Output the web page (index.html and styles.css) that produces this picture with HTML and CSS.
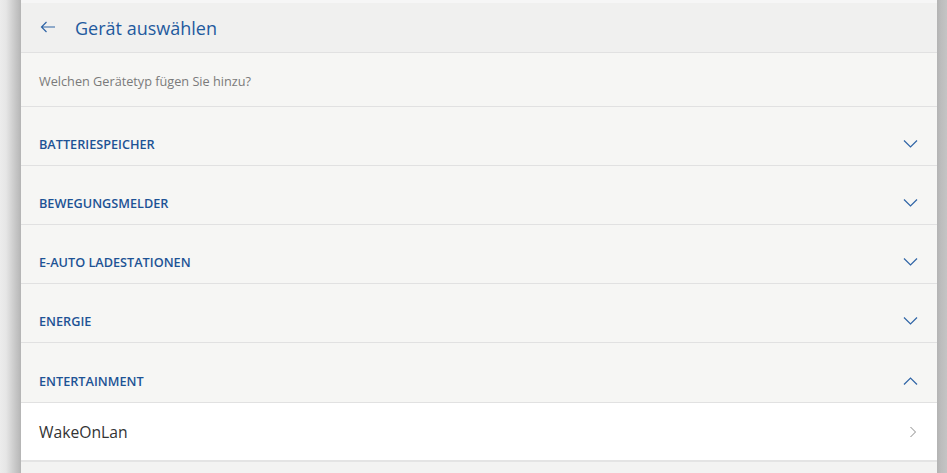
FILE: index.html
```html
<!DOCTYPE html>
<html lang="de">
<head>
<meta charset="utf-8">
<link rel="stylesheet" href="styles.css">
</head>
<body>
<div class="frame">
  <div class="edge-left"></div>
  <main class="panel">
    <header class="head">
      <svg class="back" width="16" height="12" viewBox="0 0 16 12"><path d="M15 6H1.5M6.5 1L1.5 6l5 5" fill="none" stroke="#2f64a6" stroke-width="1.2"/></svg>
      <h1 class="title">Gerät auswählen</h1>
    </header>
    <div class="question">Welchen Gerätetyp fügen Sie hinzu?</div>
    <div class="cat"><span class="cat-label">BATTERIESPEICHER</span><svg class="chev" width="15" height="10" viewBox="0 0 15 10"><path d="M1 1.5l6.5 6.5 6.5-6.5" fill="none" stroke="#2f64a6" stroke-width="1.2"/></svg></div>
    <div class="cat"><span class="cat-label">BEWEGUNGSMELDER</span><svg class="chev" width="15" height="10" viewBox="0 0 15 10"><path d="M1 1.5l6.5 6.5 6.5-6.5" fill="none" stroke="#2f64a6" stroke-width="1.2"/></svg></div>
    <div class="cat"><span class="cat-label">E-AUTO LADESTATIONEN</span><svg class="chev" width="15" height="10" viewBox="0 0 15 10"><path d="M1 1.5l6.5 6.5 6.5-6.5" fill="none" stroke="#2f64a6" stroke-width="1.2"/></svg></div>
    <div class="cat"><span class="cat-label">ENERGIE</span><svg class="chev" width="15" height="10" viewBox="0 0 15 10"><path d="M1 1.5l6.5 6.5 6.5-6.5" fill="none" stroke="#2f64a6" stroke-width="1.2"/></svg></div>
    <div class="cat cat-open"><span class="cat-label">ENTERTAINMENT</span><svg class="chev" width="15" height="10" viewBox="0 0 15 10"><path d="M1 8.5l6.5-6.5 6.5 6.5" fill="none" stroke="#2f64a6" stroke-width="1.2"/></svg></div>
    <div class="item"><span class="item-label">WakeOnLan</span><svg class="chev-r" width="8" height="12" viewBox="0 0 8 12"><path d="M1.5 1l5 5-5 5" fill="none" stroke="#8a8a8a" stroke-width="1"/></svg></div>
    <div class="rest"></div>
  </main>
  <div class="edge-right"></div>
</div>
</body>
</html>
```

FILE: styles.css
```css
html, body {
  margin: 0;
  padding: 0;
  height: 100%;
}
body {
  font-family: "Open Sans", "Noto Sans", sans-serif;
  background: #e9e9e9;
  overflow: hidden;
}
.frame {
  display: flex;
  height: 473px;
  width: 947px;
}
.edge-left {
  width: 21px;
  flex: none;
  background: linear-gradient(to right, #ececec 0px, #e6e6e6 6px, #d2d2d2 12px, #bcbcbc 19px, #b4b4b4 21px);
}
.edge-right {
  width: 10px;
  flex: none;
  background: linear-gradient(to right, #b3b3b3 0px, #bdbdbd 4px, #c4c4c4 10px);
}
.panel {
  flex: 1;
  display: flex;
  flex-direction: column;
  background: #f6f6f4;
}
.head {
  display: flex;
  align-items: center;
  height: 49px;
  border-top: 3px solid #f6f6f6;
  background: #f0f0ef;
  border-bottom: 1px solid #e1e1e1;
  padding-left: 19px;
}
.back {
  display: block;
  margin-right: 19px;
  margin-top: -1px;
}
.title {
  margin: 0;
  font-size: 18px;
  font-weight: 400;
  color: #1f5a9e;
}
.question {
  height: 50px;
  display: flex;
  align-items: center;
  padding-left: 18px;
  padding-top: 3px;
  font-size: 12.7px;
  color: #7a7a7a;
  border-bottom: 1px solid #e1e1e1;
}
.cat {
  height: 42px;
  padding: 16px 19px 0 18px;
  display: flex;
  align-items: center;
  justify-content: space-between;
  border-bottom: 1px solid #e1e1e1;
}
.cat-open {
  height: 43px;
}
.cat-label {
  font-size: 12.7px;
  font-weight: 600;
  color: #1d5395;
}
.chev {
  display: block;
}
.item {
  height: 56px;
  display: flex;
  align-items: center;
  justify-content: space-between;
  padding: 1px 20px 0 18px;
  background: #ffffff;
  border-bottom: 2px solid #e4e4e4;
}
.item-label {
  font-size: 15.7px;
  color: #333333;
}
.chev-r {
  display: block;
}
.rest {
  flex: 1;
  background: #f3f3f2;
}
```
